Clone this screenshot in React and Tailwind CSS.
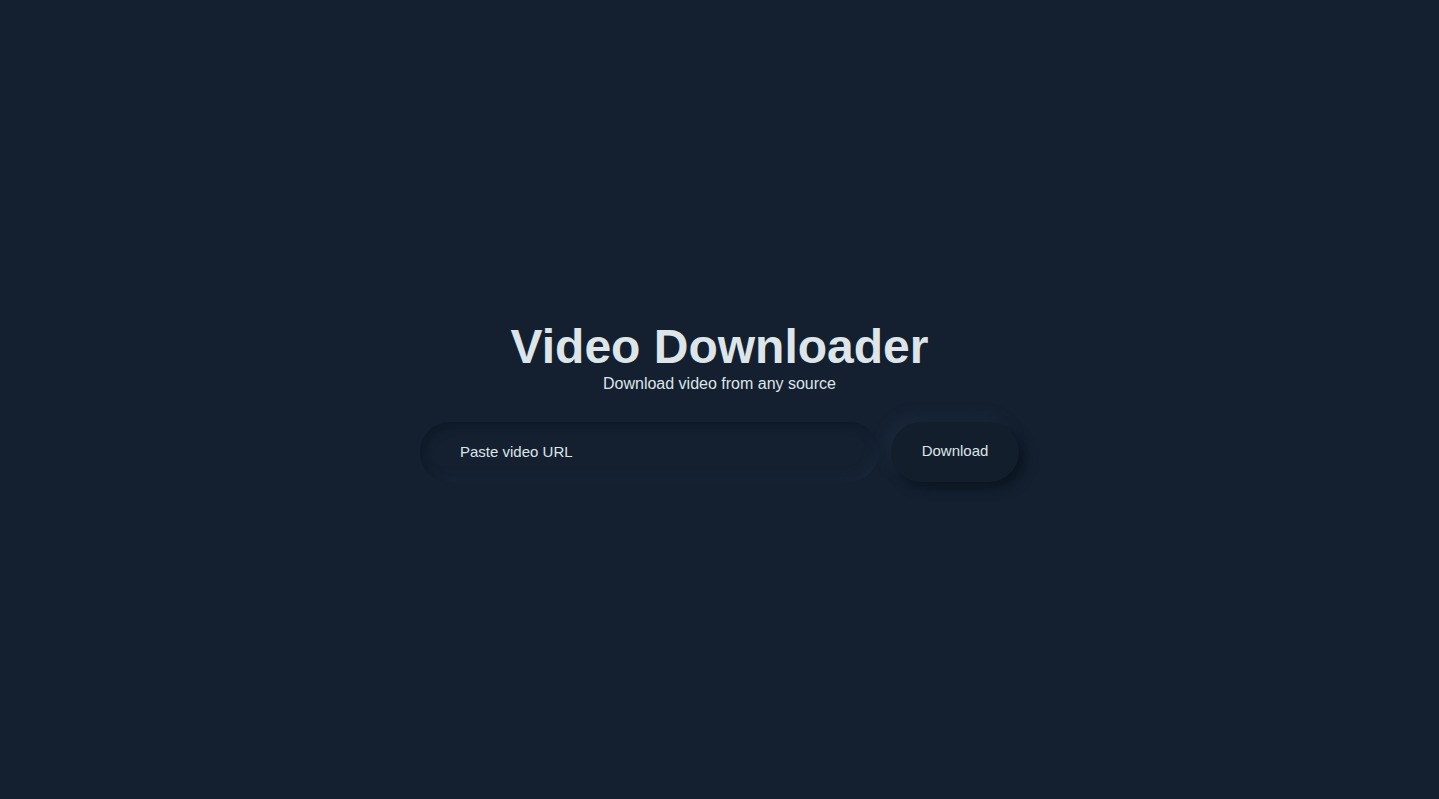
import React, { useState } from 'react';

export default function App() {
  const [url, setUrl] = useState('');

  const handleSubmit = (e) => {
    e.preventDefault();
  };

  return (
    <div
      className="min-h-screen bg-[#142030] flex items-center justify-center pt-[5px] text-[#dde5e9]"
      style={{ fontFamily: '"Liberation Sans", Arial, sans-serif' }}
    >
      <div className="flex flex-col items-center">
        <h1 className="text-5xl leading-none font-bold tracking-normal">Video Downloader</h1>
        <p className="text-base leading-6 mt-px">Download video from any source</p>

        <form onSubmit={handleSubmit} className="flex items-center gap-3 mt-[26px]">
          <input
            type="text"
            value={url}
            onChange={(e) => setUrl(e.target.value)}
            placeholder="Paste video URL"
            className="w-[459px] h-[60px] rounded-full bg-[#142030] px-10 text-[15px] text-[#dde5e9] placeholder:text-[#dde5e9] outline-none shadow-[inset_4px_4px_10px_#0f1826,inset_-4px_-4px_10px_#192739]"
          />
          <button
            type="submit"
            className="w-[128px] h-[60px] rounded-full bg-[#131e2d] text-[15px] text-[#dde5e9] shadow-[6px_6px_12px_#0c1420,-6px_-6px_12px_#1a283b]"
          >
            Download
          </button>
        </form>
      </div>
    </div>
  );
}
